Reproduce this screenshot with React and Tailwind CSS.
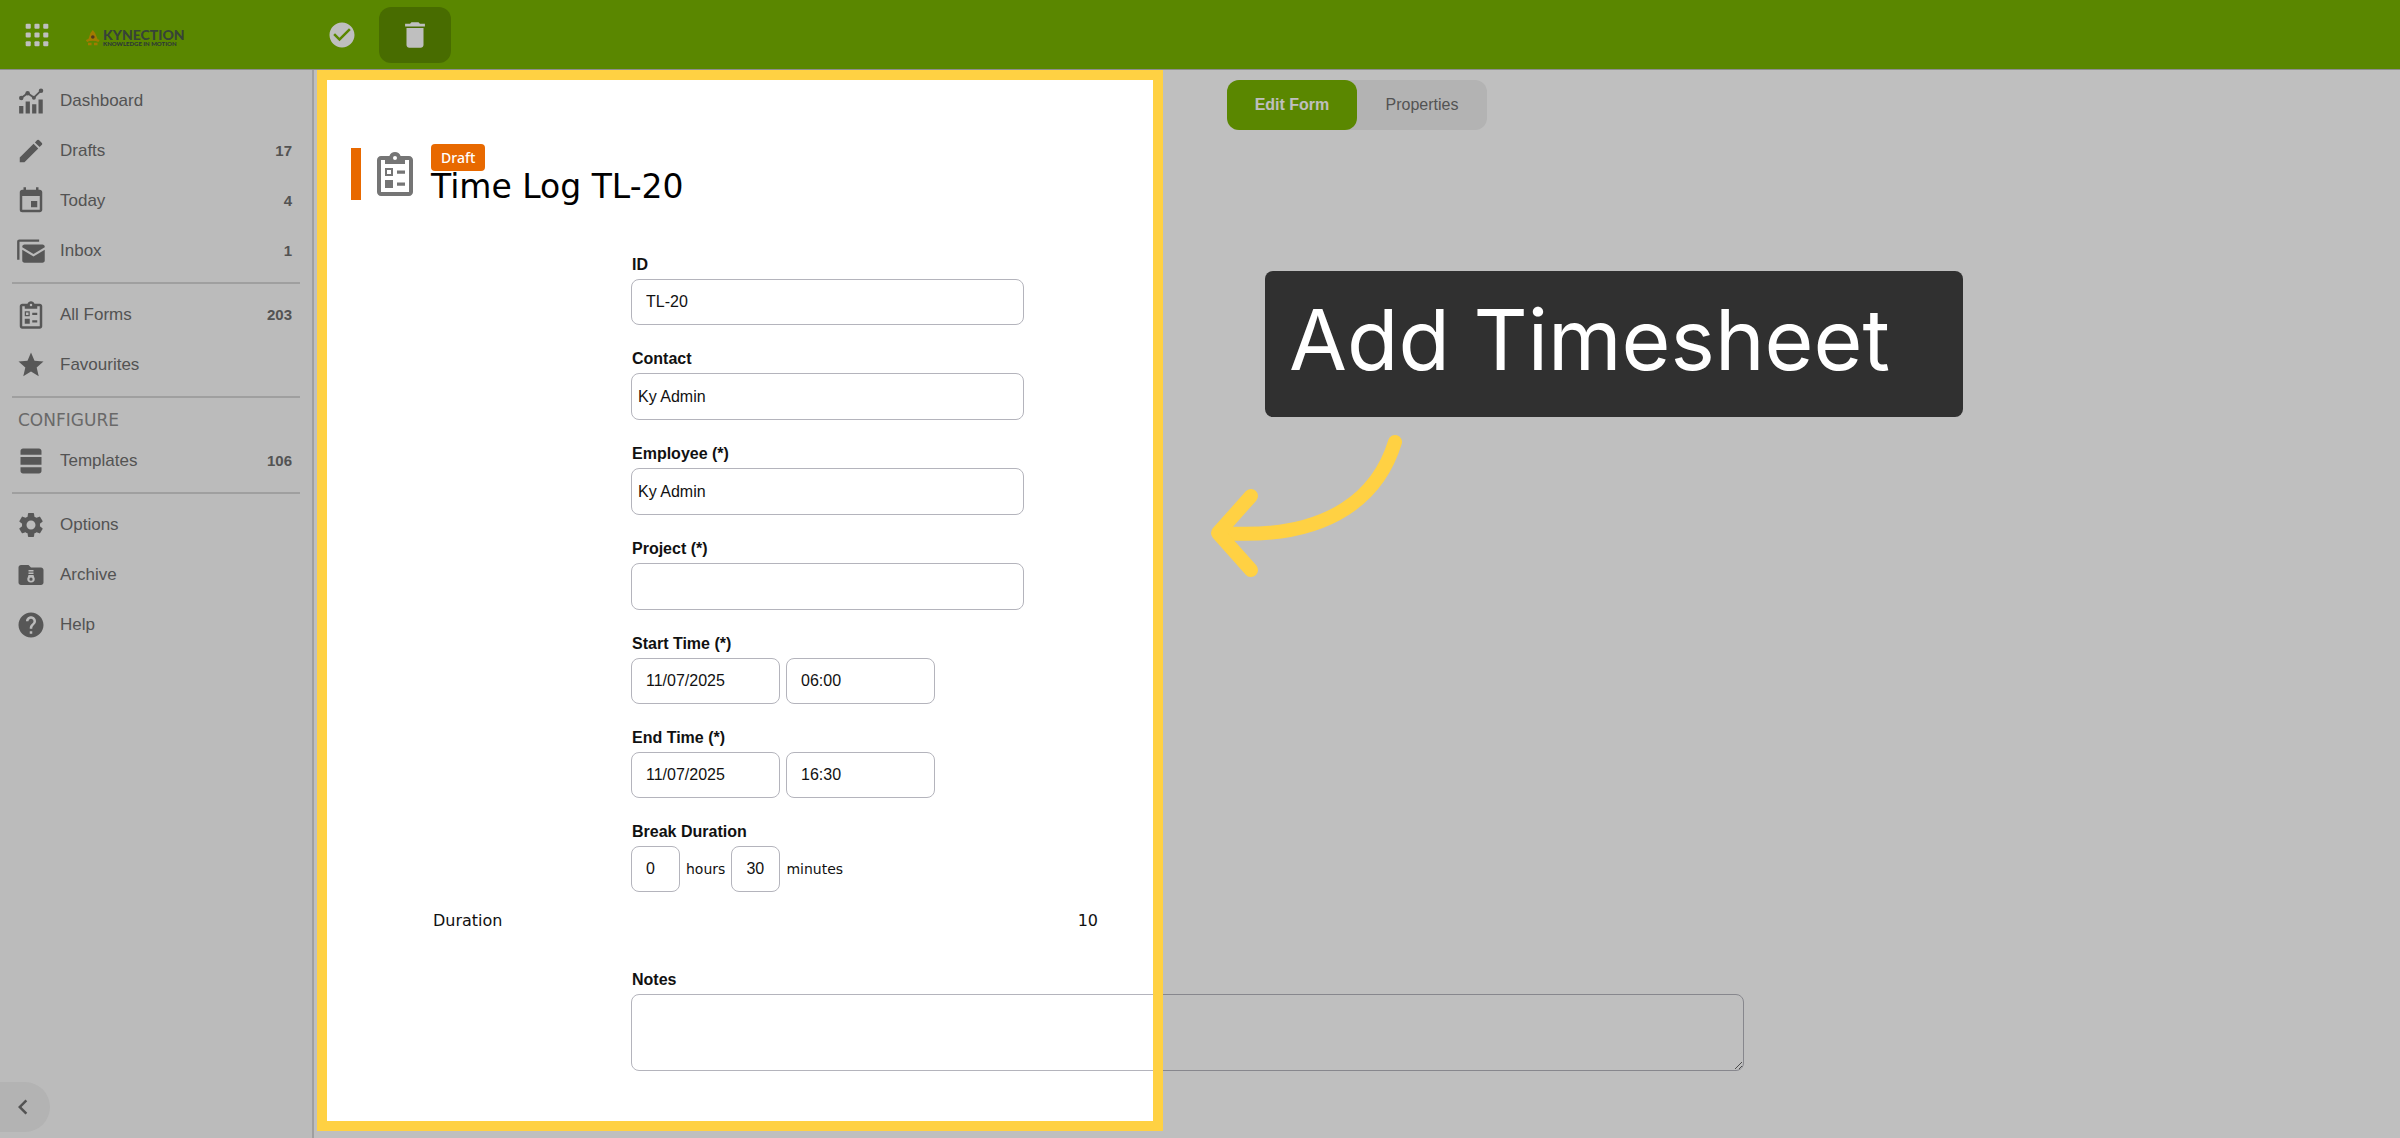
import React, { useState } from "react";
import {
  MdCheckCircle,
  MdChevronLeft,
  MdDelete,
  MdEdit,
  MdEvent,
  MdHelp,
  MdSettings,
  MdStar,
} from "react-icons/md";

const AppsIcon = ({ className }) => (
  <svg viewBox="0 0 24 24" fill="currentColor" className={className}>
    {[4, 10.2, 16.4].map((y) =>
      [4, 10.2, 16.4].map((x) => (
        <rect key={`${x}-${y}`} x={x} y={y} width="3.6" height="3.6" rx="0.8" />
      ))
    )}
  </svg>
);

const DashboardIcon = ({ className }) => (
  <svg viewBox="0 0 24 24" fill="currentColor" className={className}>
    <path d="M2.500 22V16h3.400v6zM7.700 22V12.300h3.400V22zM12.900 22v-7.500h3.400V22zM18 22V10.700h3.400V22z" />
    <path
      d="M4.2 9.600 9.300 5.800l5 3.500L20 3.700"
      fill="none"
      stroke="currentColor"
      strokeWidth="1.5"
    />
    <circle cx="4.2" cy="9.600" r="1.8" />
    <circle cx="9.300" cy="5.800" r="1.8" />
    <circle cx="14.300" cy="9.300" r="1.6" />
    <circle cx="20" cy="3.700" r="1.8" />
  </svg>
);

const InboxIcon = ({ className }) => (
  <svg viewBox="0 0 24 24" fill="currentColor" className={className}>
    <path d="M2.200 19H.9V4.500C.9 3.400 1.600 2.700 2.700 2.700H18.500V4.600H2.800V19z" />
    <path d="M6.800 6.800H21.200c1 0 1.800.8 1.800 1.800v.4l-9 5.400-9-5.400v-.4c0-1 .8-1.800 1.800-1.800zM5 11l9 5.400 9-5.400v8.500c0 1-.8 1.800-1.800 1.800H6.800c-1 0-1.800-.8-1.800-1.800z" />
  </svg>
);

const FormIcon = ({ className }) => (
  <svg viewBox="0 0 24 24" fill="currentColor" className={className}>
    <path
      fillRule="evenodd"
      d="M19 3h-4.200C14.400 1.800 13.300 1 12 1s-2.400.8-2.800 2H5c-1.100 0-2 .9-2 2v16c0 1.100.9 2 2 2h14c1.100 0 2-.9 2-2V5c0-1.100-.9-2-2-2zm-7 0a1 1 0 1 1 0 2 1 1 0 0 1 0-2zM5 5h2v2h10V5h2v16H5zM7 9h4v4H7zm1 1v2h2v-2zM13 10.200h4v1.700h-4zM7 15h4v4H7zM13 16.200h4v1.700h-4z"
    />
  </svg>
);

const TemplatesIcon = ({ className }) => (
  <svg viewBox="0 0 24 24" fill="currentColor" className={className}>
    <path d="M3.600 7V4c0-1.100.9-2 2-2h12.800c1.100 0 2 .9 2 2v3zM3.600 8.800h16.800v6.200H3.600zM3.600 16.900h16.800V20c0 1.100-.9 2-2 2H5.600c-1.100 0-2-.9-2-2z" />
  </svg>
);

const ArchiveIcon = ({ className }) => (
  <svg viewBox="0 0 24 24" fill="currentColor" className={className}>
    <path
      fillRule="evenodd"
      d="M20 6h-8l-2-2H4c-1.100 0-2 .9-2 2v12c0 1.100.9 2 2 2h16c1.100 0 2-.9 2-2V8c0-1.100-.9-2-2-2zM10 8h4v1.200h-4zm0 2h4v1.200h-4zm0 2h4l1 3a3 3 0 1 1-6 0zm2 2a1.300 1.300 0 1 0 0 2.600 1.300 1.300 0 0 0 0-2.600z"
    />
  </svg>
);

const Logo = () => (
  <svg
    viewBox="0 -5 104 24"
    className="h-6 w-[104px]"
    role="img"
    aria-label="Kynection"
  >
    <path d="M4.500 5 6.800 2 9 5l2.500 6h-9z" fill="#d9a500" />
    <path
      d="M.5 13c3-2 9-2 12.500 0M2 16h3.500M8 16h3.500"
      stroke="#d9a500"
      strokeWidth="2.400"
      fill="none"
    />
    <circle cx="6.800" cy="9" r="1.800" fill="#6b4a2b" />
    <text
      x="17"
      y="12"
      fontFamily="Lato, sans-serif"
      fontWeight="900"
      fontSize="14"
      fill="#4a5a4a"
    >
      KYNECTION
    </text>
    <text
      x="17"
      y="18"
      fontFamily="Lato, sans-serif"
      fontWeight="900"
      fontSize="6"
      fill="#3b4a4a"
    >
      KNOWLEDGE IN MOTION
    </text>
  </svg>
);

const menu = [
  {
    items: [
      { label: "Dashboard", icon: DashboardIcon },
      { label: "Drafts", icon: MdEdit, count: 17 },
      { label: "Today", icon: MdEvent, count: 4 },
      { label: "Inbox", icon: InboxIcon, count: 1 },
    ],
  },
  {
    items: [
      { label: "All Forms", icon: FormIcon, count: 203 },
      { label: "Favourites", icon: MdStar },
    ],
  },
  {
    title: "CONFIGURE",
    items: [{ label: "Templates", icon: TemplatesIcon, count: 106 }],
  },
  {
    items: [
      { label: "Options", icon: MdSettings },
      { label: "Archive", icon: ArchiveIcon },
      { label: "Help", icon: MdHelp },
    ],
  },
];

const Header = () => (
  <header className="flex h-[70px] items-center border-b border-[#bcbcbc] bg-[#79b500] text-white">
    <div className="flex w-[314px] shrink-0 items-center gap-8 pl-5">
      <button aria-label="Apps">
        <AppsIcon className="size-[34px]" />
      </button>
      <Logo />
    </div>
    <div className="flex items-center gap-[22px] pl-[13px]">
      <button aria-label="Complete">
        <MdCheckCircle className="size-[30px]" />
      </button>
      <button
        aria-label="Delete"
        className="flex h-14 w-[72px] items-center justify-center rounded-xl bg-[#619100]"
      >
        <MdDelete className="size-[34px]" />
      </button>
    </div>
  </header>
);

const Sidebar = () => (
  <aside className="flex w-[314px] shrink-0 flex-col justify-between border-r-2 border-[#d4d4d4] bg-[#fafafa] text-[#6f6f6f]">
    <nav className="px-3 pt-1.5">
      {menu.map((group, i) => (
        <div
          key={i}
          className={i > 0 ? "mt-1.5 border-t-2 border-[#d4d4d4] pt-1.5" : ""}
        >
          {group.title && (
            <h2 className="pl-1.5 font-['DejaVu_Sans',sans-serif] text-[17px] leading-8 text-[#8c8c8c]">
              {group.title}
            </h2>
          )}
          {group.items.map(({ label, icon: Icon, count }) => (
            <a
              key={label}
              href="#"
              className="flex h-[50px] items-center gap-3.5 pr-2 pl-1"
            >
              <Icon className="size-[30px] text-[#757575]" />
              <span className="flex-1 text-[17px]">{label}</span>
              {count && <span className="text-[15px] font-bold">{count}</span>}
            </a>
          ))}
        </div>
      ))}
    </nav>
    <button
      aria-label="Collapse menu"
      className="mb-1.5 flex h-[50px] w-[50px] items-center rounded-r-full bg-[#efefef] pl-2"
    >
      <MdChevronLeft className="size-[30px]" />
    </button>
  </aside>
);

const Field = ({ label, id, children }) => (
  <div className="mb-5">
    <label
      htmlFor={id}
      className="mb-0.5 block pt-0.5 pl-px text-base leading-6 font-bold"
    >
      {label}
    </label>
    {children}
  </div>
);

const inputClass =
  "block h-[46px] rounded-lg border border-[#b4b4bc] bg-white px-3.5 text-base";
const lookupClass =
  "block h-[47px] w-[393px] rounded-lg border border-[#b4b4bc] bg-white px-1.5 text-base";

const DateTime = ({ id, date, time }) => (
  <div className="flex gap-1.5">
    <input id={id} defaultValue={date} className={`${inputClass} w-[149px]`} />
    <input
      aria-label="Time"
      defaultValue={time}
      className={`${inputClass} w-[149px]`}
    />
  </div>
);

const TimeLogForm = () => (
  <form className="pl-[37px]">
    <div className="flex items-center pt-3.5">
      <div className="h-[52px] w-2.5 bg-[#e86900]" />
      <FormIcon className="ml-2.5 size-12 text-[#757575]" />
      <div className="ml-3">
        <span className="flex h-[27px] w-fit items-center rounded bg-[#e86900] px-2.5 font-['Noto_Sans',sans-serif] text-sm font-medium text-white">
          Draft
        </span>
        <h1 className="font-['DejaVu_Sans',sans-serif] text-[33px] leading-8 text-black">
          Time Log TL-20
        </h1>
      </div>
    </div>

    <div className="pt-12 pl-[280px]">
      <Field label="ID" id="id">
        <input
          id="id"
          defaultValue="TL-20"
          className={`${inputClass} w-[393px]`}
        />
      </Field>
      <Field label="Contact" id="contact">
        <input
          id="contact"
          defaultValue="Ky Admin"
          className={lookupClass}
        />
      </Field>
      <Field label="Employee (*)" id="employee">
        <input
          id="employee"
          defaultValue="Ky Admin"
          className={lookupClass}
        />
      </Field>
      <Field label="Project (*)" id="project">
        <input id="project" className={lookupClass} />
      </Field>
      <Field label="Start Time (*)" id="start">
        <DateTime id="start" date="11/07/2025" time="06:00" />
      </Field>
      <Field label="End Time (*)" id="end">
        <DateTime id="end" date="11/07/2025" time="16:30" />
      </Field>
      <Field label="Break Duration" id="hours">
        <div className="flex items-center gap-1.5 font-['DejaVu_Sans',sans-serif] text-sm">
          <input
            id="hours"
            defaultValue="0"
            className={`${inputClass} w-[49px] pr-0 font-['Liberation_Sans',sans-serif]`}
          />
          <span>hours</span>
          <input
            aria-label="Minutes"
            defaultValue="30"
            className={`${inputClass} w-[49px] pr-0 font-['Liberation_Sans',sans-serif]`}
          />
          <span>minutes</span>
        </div>
      </Field>
    </div>

    <div className="mb-9 ml-20 flex w-[669px] justify-between px-0.5 font-['DejaVu_Sans',sans-serif] text-base leading-[18px]">
      <span>Duration</span>
      <span>10</span>
    </div>

    <div className="pl-[280px]">
      <Field label="Notes" id="notes">
        <textarea
          id="notes"
          className="block h-[77px] w-[1113px] rounded-lg border border-[#b4b4bc] bg-white px-3.5"
        />
      </Field>
    </div>
  </form>
);

const Callout = () => (
  <div className="absolute top-[201px] left-[896px]">
    <div className="ml-[55px] w-[698px] rounded-lg bg-[#303030] px-6 pt-4 pb-6 font-['Inter',sans-serif] text-[84px] leading-[106px] text-white">
      Add Timesheet
    </div>
    <svg
      viewBox="0 0 200 150"
      className="mt-3.5 h-[150px] w-[200px]"
      fill="none"
      stroke="#ffd143"
      strokeWidth="14"
      strokeLinecap="round"
      strokeLinejoin="round"
    >
      <path d="M185 11C170 60 125 110 12 102" />
      <path d="M41 65 8 102l33 37" />
    </svg>
  </div>
);

const App = () => {
  const [tab, setTab] = useState("Edit Form");

  return (
    <div className="flex min-h-screen flex-col overflow-hidden bg-white font-['Liberation_Sans',sans-serif] text-[#111]">
      <Header />
      <div className="flex flex-1">
        <Sidebar />
        <main className="relative flex-1">
          <div className="mx-auto mt-2.5 flex w-fit rounded-xl bg-[#efefef] text-base">
            {["Edit Form", "Properties"].map((name) => (
              <button
                key={name}
                onClick={() => setTab(name)}
                className={`h-[50px] w-[130px] rounded-xl ${
                  tab === name
                    ? "bg-[#79b500] font-bold text-white"
                    : "text-[#6f6f6f]"
                }`}
              >
                {name}
              </button>
            ))}
          </div>
          <TimeLogForm />
          {/* Spotlight: everything outside the frame is dimmed by its shadow */}
          <div className="pointer-events-none absolute top-0 bottom-[7px] left-[3px] w-[846px] border-[10px] border-[#ffd143] shadow-[0_0_0_3000px_rgba(0,0,0,0.25)]" />
          <Callout />
        </main>
      </div>
    </div>
  );
};

export default App;
